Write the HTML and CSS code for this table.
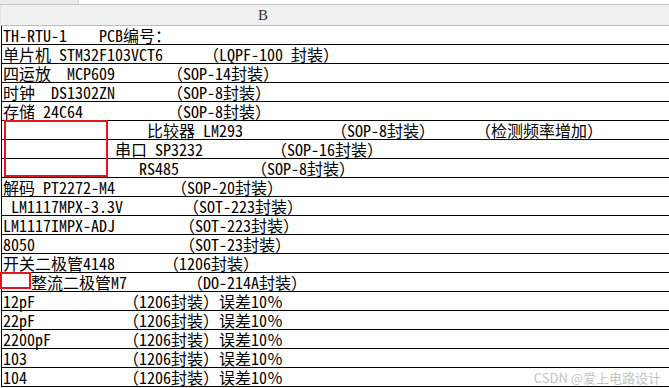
FILE: index.html
```html
<!DOCTYPE html>
<html lang="zh">
<head>
<meta charset="utf-8">
<title>元件清单</title>
<link rel="stylesheet" href="styles.css">
</head>
<body>
<div class="page">
  <div class="topbar"><div class="tb-left"></div></div>
  <div class="colhead"><span class="colname">B</span></div>
  <div class="sheet">
    <div class="row">TH-RTU-1    PCB编号：</div>
    <div class="row">单片机 STM32F103VCT6     （LQPF-100 封装）</div>
    <div class="row">四运放  MCP609      <i class="h"></i>（SOP-14封装）</div>
    <div class="row">时钟  DS1302ZN      <i class="h"></i>（SOP-8封装）</div>
    <div class="row">存储 24C64          <i class="h"></i>（SOP-8封装）</div>
    <div class="row">                  比较器 LM293           （SOP-8封装）     （检测频率增加）</div>
    <div class="row">              串口 SP3232        <i class="h"></i>（SOP-16封装）</div>
    <div class="row">                 RS485         （SOP-8封装）</div>
    <div class="row">解码 PT2272-M4       （SOP-20封装）</div>
    <div class="row"> LM1117MPX-3.3V       <i class="h"></i>（SOT-223封装）</div>
    <div class="row">LM1117IMPX-ADJ        （SOT-223封装）</div>
    <div class="row">8050                  （SOT-23封装）</div>
    <div class="row">开关二极管4148      （1206封装）</div>
    <div class="row">   <i class="h"></i>整流二极管M7       <i class="h"></i>（DO-214A封装）</div>
    <div class="row">12pF           （1206封装）误差10％</div>
    <div class="row">22pF           （1206封装）误差10％</div>
    <div class="row">2200pF         （1206封装）误差10％</div>
    <div class="row">103            （1206封装）误差10％</div>
    <div class="row">104            （1206封装）误差10％</div>
  </div>
  <div class="mark mark-a"></div>
  <div class="mark mark-b"></div>
  <div class="wm">CSDN @爱上电路设计</div>
</div>
</body>
</html>
```
FILE: styles.css
```css
html, body {
  margin: 0;
  padding: 0;
  background: #ffffff;
}
.page {
  position: relative;
  width: 669px;
  height: 388px;
  overflow: hidden;
  font-family: "Noto Sans Mono CJK SC", "Liberation Mono", "Noto Sans CJK SC", monospace;
  color: #000;
}
.topbar {
  height: 4px;
  border-bottom: 1px solid #c6c6c6;
  background: #ffffff;
  display: flex;
}
.tb-left {
  width: 78px;
  background: #ececec;
  border-right: 1px solid #d4d4d4;
}
.colhead {
  height: 20px;
  background: #f0f0f0;
  border-bottom: 1px solid #bdbdbd;
  border-left: 1px solid #e4e4e4;
  display: flex;
}
.colname {
  width: 524px;
  text-align: center;
  font-family: "Liberation Serif", "DejaVu Serif", serif;
  font-size: 15px;
  line-height: 20px;
  color: #333;
}
.sheet {
  padding-left: 1px;
}
.row {
  height: 18px;
  line-height: 18px;
  border-bottom: 1px solid #000;
  border-left: 1px solid #000;
  padding-left: 1px;
  font-size: 16px;
  white-space: pre;
}
.h {
  display: inline-block;
  width: 4px;
}
.mark {
  position: absolute;
  border: 2px solid #e8141c;
  box-sizing: border-box;
}
.mark-a {
  left: 4px;
  top: 120px;
  width: 104px;
  height: 57px;
}
.mark-b {
  left: 0;
  top: 272px;
  width: 31px;
  height: 17px;
}
.wm {
  position: absolute;
  right: 8px;
  top: 369px;
  font-family: "Noto Sans CJK SC", sans-serif;
  font-size: 13px;
  line-height: 17px;
  color: #c4c4c4;
  background: rgba(255,255,255,0.6);
}
```
